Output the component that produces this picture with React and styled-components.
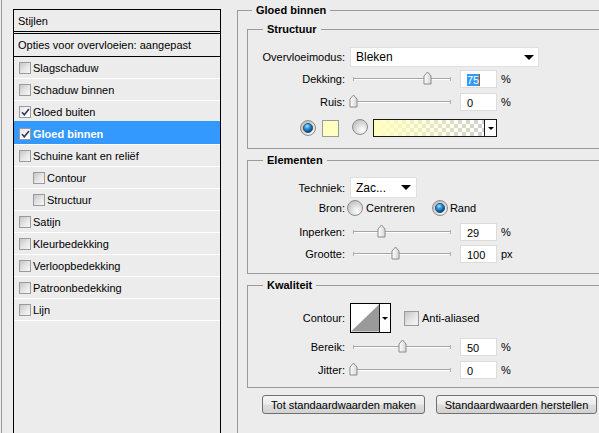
import { useId } from "react";
import styled, { createGlobalStyle } from "styled-components";

const GlobalStyle = createGlobalStyle`
  * { box-sizing: border-box; }
  body {
    margin: 0;
    background: #ececec;
    overflow: hidden;
    font-family: "Liberation Sans", Arial, sans-serif;
    font-size: 11px;
    color: #000;
  }
`;

const Window = styled.div`
  display: flex;
  width: 599px;
  height: 433px;
  padding-left: 1px;
  overflow: hidden;
`;

/* Left: list of layer styles */
const SidePane = styled.div`
  flex: 0 0 236px;
  border-left: 1px solid #9c9c9c;
  padding: 9px 16px 0 11px;
`;

const StyleList = styled.div`
  width: 208px;
  height: 440px;
  border: 1px solid #000;
  border-bottom: none;
`;

const ListHeader = styled.div`
  height: ${(p) => p.$h}px;
  display: flex;
  align-items: center;
  padding-left: 4px;
  margin-bottom: ${(p) => (p.$gap ? 1 : 0)}px;
  border-top: ${(p) => (p.$top ? "1px solid #000" : "none")};
  border-bottom: 1px solid #000;
`;

const StyleItem = styled.div`
  height: ${(p) => (p.$active ? 24 : 22)}px;
  margin-top: ${(p) => (p.$active ? -2 : 0)}px;
  padding-top: ${(p) => (p.$active ? 2 : 0)}px;
  display: flex;
  align-items: center;
  gap: 2px;
  padding-left: ${(p) => (p.$indent ? 19 : 5)}px;
  border-bottom: 1px solid #fff;
  background: ${(p) => (p.$active ? "#3399ff" : "transparent")};
  color: ${(p) => (p.$active ? "#fff" : "#000")};
  font-weight: ${(p) => (p.$active ? "bold" : "normal")};
`;

const Box = styled.span`
  flex: none;
  width: ${(p) => p.$size}px;
  height: ${(p) => p.$size}px;
  border: 1px solid #9b9b9b;
  background: ${(p) =>
    p.$checked
      ? "linear-gradient(135deg, #e4e4e4 0%, #fafafa 60%, #ffffff 100%)"
      : "linear-gradient(135deg, #c6c6c6 0%, #e6e6e6 55%, #f6f6f6 100%)"};
  display: flex;
  align-items: center;
  justify-content: center;
`;

/* Right: settings panel */
const Panel = styled.fieldset`
  flex: none;
  width: 420px;
  min-height: 470px;
  margin: 4px 0 0;
  padding: 6px 0 0 9px;
  border: 1px solid #9a9a9a;
`;

const Legend = styled.legend`
  font-weight: bold;
  line-height: 13px;
  padding: 0 4px;
  margin-left: ${(p) => p.$offset}px;
`;

const Group = styled.fieldset`
  min-width: 0;
  margin: ${(p) => p.$mt}px 0 0;
  padding: ${(p) => p.$pt}px 0 ${(p) => p.$pb}px 0;
  border: 1px solid #9a9a9a;
`;

const Row = styled.div`
  display: flex;
  align-items: center;
  height: ${(p) => p.$h || 18}px;
  margin-top: ${(p) => p.$mt || 0}px;
  padding-left: ${(p) => p.$pl || 0}px;
  gap: ${(p) => p.$gap || 0}px;
`;

const Label = styled.span`
  flex: 0 0 97px;
  text-align: right;
  margin-right: 5px;
  white-space: nowrap;
`;

const Select = styled.div`
  flex: none;
  width: ${(p) => p.$w}px;
  height: ${(p) => p.$h}px;
  display: flex;
  align-items: center;
  justify-content: space-between;
  padding: 0 ${(p) => p.$pr}px 0 5px;
  background: #fff;
  border: 1px solid #e0e0e0;
  font-size: 12px;
`;

const Caret = styled.span`
  width: 0;
  height: 0;
  border-left: 5px solid transparent;
  border-right: 5px solid transparent;
  border-top: 5px solid #000;
`;

const SliderBox = styled.div`
  flex: none;
  width: 110px;
  height: 18px;
  display: flex;
  align-items: center;
  padding: 0 9px 0 3px;
`;

const Track = styled.div`
  position: relative;
  flex: 1;
  height: 2px;
  border-top: 1px solid #a6a6a6;
  border-bottom: 1px solid #fff;
  &::before,
  &::after {
    content: "";
    position: absolute;
    top: -2px;
    width: 1px;
    height: 4px;
    background: #b0b0b0;
  }
  &::before { left: 0; }
  &::after { right: 0; }
`;

const Thumb = styled.svg`
  position: absolute;
  top: -8px;
  margin-left: -4px;
`;

const NumberBox = styled.div`
  flex: none;
  width: 37px;
  height: 18px;
  display: flex;
  align-items: center;
  padding: 1px 0 0 6px;
  background: #fff;
  border: 1px solid #dcdcdc;
`;

const Selected = styled.span`
  background: #3399ff;
  color: #fff;
`;

const Cursor = styled.span`
  width: 1px;
  height: 12px;
  background: #c05a00;
`;

const Unit = styled.span`
  margin-left: 4px;
`;

const Swatch = styled.span`
  flex: none;
  width: 17px;
  height: 17px;
  background: #ffffc0;
  border: 1px solid #9a9a9a;
`;

const GradientPicker = styled.div`
  flex: none;
  width: 124px;
  height: 18px;
  display: flex;
  border: 1px solid #1a1a1a;
`;

const GradientFill = styled.div`
  flex: 1;
  background: linear-gradient(to right, #ffffc0 0%, rgba(255, 255, 192, 0) 100%),
    repeating-conic-gradient(#d0d0d0 0 25%, #ffffff 0 50%) 0 0 / 8px 8px;
`;

const MiniArrow = styled.div`
  flex: none;
  width: ${(p) => p.$w}px;
  display: flex;
  align-items: center;
  justify-content: center;
  background: #fff;
  border-left: 1px solid #1a1a1a;
  &::after {
    content: "";
    border-left: 3px solid transparent;
    border-right: 3px solid transparent;
    border-top: 3px solid #000;
  }
`;

const RadioOption = styled.label`
  display: flex;
  align-items: center;
  gap: ${(p) => p.$gap}px;
  margin-left: ${(p) => p.$ml}px;
`;

const ContourPicker = styled.div`
  flex: none;
  width: 41px;
  height: 30px;
  display: flex;
  border: 1px solid #000;
  background: #fff;
`;

const CheckLabel = styled.label`
  display: flex;
  align-items: center;
  gap: 3px;
  margin-left: 13px;
`;

const ButtonRow = styled.div`
  display: flex;
  gap: 11px;
  margin: 7px 0 0 15px;
`;

const Button = styled.button`
  width: ${(p) => p.$w}px;
  height: 19px;
  padding: 0;
  font: inherit;
  color: #000;
  border: 1px solid #707070;
  border-radius: 3px;
  background: linear-gradient(#f4f4f4, #ececec 48%, #dedede 52%, #d2d2d2);
`;

function CheckBox({ checked, size = 12 }) {
  return (
    <Box $size={size} $checked={checked}>
      {checked && (
        <svg width="9" height="8" viewBox="0 0 9 8">
          <path d="M1 4.2 L3.3 6.8 L8 1" fill="none" stroke="#2a3a6a" strokeWidth="1.6" />
        </svg>
      )}
    </Box>
  );
}

function Radio({ on }) {
  const id = useId().replace(/:/g, "");
  return (
    <svg width="16" height="16" viewBox="0 0 16 16" style={{ flex: "none" }}>
      <defs>
        <radialGradient id={`o${id}`} cx="0.65" cy="0.7" r="0.7">
          <stop offset="0" stopColor="#ffffff" />
          <stop offset="1" stopColor="#c4c4c4" />
        </radialGradient>
        <radialGradient id={`b${id}`} cx="0.4" cy="0.3" r="0.7">
          <stop offset="0" stopColor="#9fe0ff" />
          <stop offset="0.45" stopColor="#2a8fd6" />
          <stop offset="1" stopColor="#0a3f74" />
        </radialGradient>
      </defs>
      <circle cx="8" cy="8" r="7.5" fill={`url(#o${id})`} stroke="#8c8c8c" />
      {on && <circle cx="8" cy="8" r="4.6" fill={`url(#b${id})`} stroke="#163e66" strokeWidth="0.8" />}
    </svg>
  );
}

function Slider({ value }) {
  return (
    <SliderBox>
      <Track>
        <Thumb width="9" height="14" viewBox="0 0 9 14" style={{ left: `${value * 100}%` }}>
          <defs>
            <linearGradient id="thumbFill" x1="0" y1="0" x2="1" y2="0">
              <stop offset="0" stopColor="#ffffff" />
              <stop offset="1" stopColor="#d6d6d6" />
            </linearGradient>
          </defs>
          <path d="M1 13 V5 L4.5 1 L8 5 V13 Z" fill="url(#thumbFill)" stroke="#8a8a8a" strokeLinejoin="round" />
        </Thumb>
      </Track>
    </SliderBox>
  );
}

function SliderRow({ label, value, max = 100, unit, mt, selected }) {
  return (
    <Row $mt={mt}>
      <Label>{label}</Label>
      <Slider value={value / max} />
      <NumberBox>
        {selected ? (
          <>
            <Selected>{value}</Selected>
            <Cursor />
          </>
        ) : (
          value
        )}
      </NumberBox>
      <Unit>{unit}</Unit>
    </Row>
  );
}

const styleItems = [
  { label: "Slagschaduw" },
  { label: "Schaduw binnen" },
  { label: "Gloed buiten", checked: true },
  { label: "Gloed binnen", checked: true, active: true },
  { label: "Schuine kant en reliëf" },
  { label: "Contour", indent: true },
  { label: "Structuur", indent: true },
  { label: "Satijn" },
  { label: "Kleurbedekking" },
  { label: "Verloopbedekking" },
  { label: "Patroonbedekking" },
  { label: "Lijn" },
];

export default function App() {
  return (
    <>
      <GlobalStyle />
      <Window>
        <SidePane>
          <StyleList>
            <ListHeader $h={22} $gap>
              Stijlen
            </ListHeader>
            <ListHeader $h={24} $top>
              Opties voor overvloeien: aangepast
            </ListHeader>
            {styleItems.map((item) => (
              <StyleItem key={item.label} $indent={item.indent} $active={item.active}>
                <CheckBox checked={item.checked} />
                {item.label}
              </StyleItem>
            ))}
          </StyleList>
        </SidePane>

        <Panel>
          <Legend $offset={5}>Gloed binnen</Legend>

          <Group $mt={0} $pt={11} $pb={11}>
            <Legend $offset={15}>Structuur</Legend>
            <Row $h={20}>
              <Label>Overvloeimodus:</Label>
              <Select $w={189} $h={20} $pr={4}>
                Bleken
                <Caret />
              </Select>
            </Row>
            <SliderRow label="Dekking:" value={75} unit="%" mt={3} selected />
            <SliderRow label="Ruis:" value={0} unit="%" mt={5} />
            <Row $mt={8} $pl={52}>
              <Radio on />
              <Swatch style={{ marginLeft: 6 }} />
              <span style={{ marginLeft: 13 }}>
                <Radio />
              </span>
              <GradientPicker style={{ marginLeft: 5 }}>
                <GradientFill />
                <MiniArrow $w={12} />
              </GradientPicker>
            </Row>
          </Group>

          <Group $mt={5} $pt={10} $pb={10}>
            <Legend $offset={15}>Elementen</Legend>
            <Row $h={21}>
              <Label>Techniek:</Label>
              <Select $w={67} $h={21} $pr={5}>
                Zac...
                <Caret />
              </Select>
            </Row>
            <Row $h={20}>
              <Label>Bron:</Label>
              <RadioOption $gap={3} $ml={-3}>
                <Radio />
                Centreren
              </RadioOption>
              <RadioOption $gap={2} $ml={17}>
                <Radio on />
                Rand
              </RadioOption>
            </Row>
            <SliderRow label="Inperken:" value={29} unit="%" mt={5} />
            <SliderRow label="Grootte:" value={100} max={235} unit="px" mt={4} />
          </Group>

          <Group $mt={5} $pt={11} $pb={8}>
            <Legend $offset={15}>Kwaliteit</Legend>
            <Row $h={30}>
              <Label>Contour:</Label>
              <ContourPicker>
                <svg width="29" height="28" viewBox="0 0 29 28">
                  <polygon points="0,28 29,0 29,28" fill="#9a9a9a" />
                </svg>
                <MiniArrow $w={11} />
              </ContourPicker>
              <CheckLabel>
                <CheckBox size={15} />
                Anti-aliased
              </CheckLabel>
            </Row>
            <SliderRow label="Bereik:" value={50} unit="%" mt={5} />
            <SliderRow label="Jitter:" value={0} unit="%" mt={5} />
          </Group>

          <ButtonRow>
            <Button $w={163}>Tot standaardwaarden maken</Button>
            <Button $w={161}>Standaardwaarden herstellen</Button>
          </ButtonRow>
        </Panel>
      </Window>
    </>
  );
}
